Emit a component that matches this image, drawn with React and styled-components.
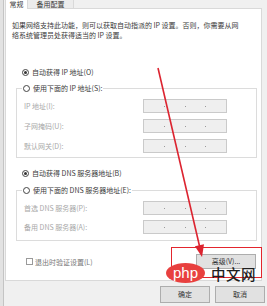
import React from 'react'
import styled, { createGlobalStyle } from 'styled-components'

const GlobalStyle = createGlobalStyle`
  html, body { margin: 0; padding: 0; background: #f0f0f0; }
  body { font-family: "Noto Sans CJK SC", "Noto Sans", sans-serif; }
`

const Window = styled.div`
  position: relative;
  display: flex;
  width: 267px;
  height: 306px;
  overflow: hidden;
  background: #f0f0f0;
  color: #3a3a3a;
  font-size: 7px;
`

const Edge = styled.div`
  width: 3px;
  border-right: 1px solid #c4c4c4;
  background: #e2e2e2;
`

const Main = styled.div`
  flex: 1;
  display: flex;
  flex-direction: column;
`

const Tabs = styled.div`
  position: relative;
  z-index: 1;
  display: flex;
  align-items: flex-start;
  height: 9px;
  margin-bottom: -1px;
  padding-left: 1px;
`

const Tab = styled.div`
  box-sizing: border-box;
  width: ${p => p.$w}px;
  height: ${p => (p.$active ? 9 : 8)}px;
  line-height: 9px;
  text-align: center;
  font-size: 7px;
  background: ${p => (p.$active ? '#fff' : '#ececec')};
  border: 1px solid #d9d9d9;
  border-top: none;
  border-bottom: none;
  ${p => !p.$active && 'border-left: none;'}
`

const Panel = styled.div`
  box-sizing: border-box;
  width: 257px;
  height: 273px;
  margin-left: 1px;
  padding: 11px 4px 0 6px;
  background: #fff;
  border: 1px solid #d9d9d9;
  display: flex;
  flex-direction: column;
`

const Intro = styled.p`
  margin: 0;
  line-height: 10px;
`

const Option = styled.label`
  display: flex;
  align-items: center;
  gap: 3px;
  height: 12px;
  margin: ${p => p.$top || 0}px 0 0 10px;
  white-space: nowrap;
`

const Radio = styled.span`
  box-sizing: border-box;
  width: 7px;
  height: 7px;
  border: 1px solid #444;
  border-radius: 50%;
  background: #fff;
  display: flex;
  align-items: center;
  justify-content: center;

  &::after {
    content: '';
    width: 3px;
    height: 3px;
    border-radius: 50%;
    background: ${p => (p.$checked ? '#333' : 'transparent')};
  }
`

const Group = styled.fieldset`
  box-sizing: border-box;
  width: 241px;
  margin: ${p => p.$top}px 0 0 4px;
  padding: 5px 29px ${p => p.$bottom}px 5px;
  border: 1px solid #dcdcdc;
  display: flex;
  flex-direction: column;
  gap: ${p => p.$gap}px;

  legend {
    display: flex;
    align-items: center;
    gap: 3px;
    height: 12px;
    padding: 0 1px;
    white-space: nowrap;
  }
`

const Field = styled.div`
  display: flex;
  align-items: center;
  justify-content: space-between;
  height: 14px;
`

const FieldLabel = styled.span`
  margin-left: 2px;
  color: #a8a8a8;
`

const AddressBox = styled.div`
  box-sizing: border-box;
  width: 84px;
  height: 14px;
  background: #efefef;
  border: 1px solid #cacaca;
  display: flex;
  align-items: center;
  justify-content: space-evenly;

  span {
    width: 1px;
    height: 1px;
    background: #9a9a9a;
  }
`

const BottomRow = styled.div`
  display: flex;
  align-items: center;
  justify-content: space-between;
  height: 15px;
  margin-top: 13px;
`

const Check = styled.label`
  display: flex;
  align-items: center;
  gap: 2px;
  margin-left: 14px;
  color: #777;

  span {
    box-sizing: border-box;
    width: 7px;
    height: 7px;
    border: 1px solid #9a9a9a;
    background: #fff;
  }
`

const Button = styled.button`
  box-sizing: border-box;
  width: ${p => p.$w}px;
  height: ${p => p.$h}px;
  margin-right: ${p => p.$mr || 0}px;
  padding: 0;
  font: inherit;
  font-size: 7px;
  line-height: ${p => p.$lh || p.$h - 2}px;
  color: #333;
  background: #e1e1e1;
  border: 1px solid #adadad;
`

const Footer = styled.div`
  display: flex;
  justify-content: flex-end;
  gap: 5px;
  padding: 5px 2px 0 0;
`

const Highlight = styled.div`
  position: absolute;
  left: 171px;
  top: 247px;
  width: 91px;
  height: 31px;
  box-sizing: border-box;
  border: 1.5px solid #e3262e;
`

const Overlay = styled.svg`
  position: absolute;
  left: 0;
  top: 0;
  pointer-events: none;
`

const Watermark = styled.div`
  position: absolute;
  left: 166px;
  top: 263px;
  display: flex;
  align-items: center;
  gap: 6px;
`

const PhpBadge = styled.span`
  width: 39px;
  height: 20px;
  border-radius: 50%;
  background: #e8403f;
  color: #fff;
  font-family: "Liberation Sans", Arial, sans-serif;
  font-size: 15px;
  line-height: 19px;
  text-align: center;
`

const SiteName = styled.span`
  margin-top: 2px;
  color: #1e1e1e;
  font-size: 14.5px;
  font-weight: 500;
  line-height: 18px;
  letter-spacing: 0.5px;
`

const Address = () => (
  <AddressBox>
    <span />
    <span />
    <span />
  </AddressBox>
)

export default function App() {
  return (
    <>
      <GlobalStyle />
      <Window>
        <Edge />
        <Main>
          <Tabs>
            <Tab $w={23} $active>常规</Tab>
            <Tab $w={46}>备用配置</Tab>
          </Tabs>
          <Panel>
            <Intro>
              如果网络支持此功能，则可以获取自动指派的 IP 设置。否则，你需要从网
              <br />
              络系统管理员处获得适当的 IP 设置。
            </Intro>

            <Option $top={26}>
              <Radio $checked />
              自动获得 IP 地址(O)
            </Option>
            <Group $top={4} $bottom={4} $gap={6}>
              <legend>
                <Radio />
                使用下面的 IP 地址(S):
              </legend>
              <Field>
                <FieldLabel>IP 地址(I):</FieldLabel>
                <Address />
              </Field>
              <Field>
                <FieldLabel>子网掩码(U):</FieldLabel>
                <Address />
              </Field>
              <Field>
                <FieldLabel>默认网关(D):</FieldLabel>
                <Address />
              </Field>
            </Group>

            <Option $top={9}>
              <Radio $checked />
              自动获得 DNS 服务器地址(B)
            </Option>
            <Group $top={5} $bottom={6} $gap={5}>
              <legend>
                <Radio />
                使用下面的 DNS 服务器地址(E):
              </legend>
              <Field>
                <FieldLabel>首选 DNS 服务器(P):</FieldLabel>
                <Address />
              </Field>
              <Field>
                <FieldLabel>备用 DNS 服务器(A):</FieldLabel>
                <Address />
              </Field>
            </Group>

            <BottomRow>
              <Check>
                <span />
                退出时验证设置(L)
              </Check>
              <Button $w={60} $h={15} $lh={11} $mr={1}>高级(V)...</Button>
            </BottomRow>
          </Panel>
          <Footer>
            <Button $w={50} $h={17}>确定</Button>
            <Button $w={50} $h={17}>取消</Button>
          </Footer>
        </Main>

        <Highlight />
        <Overlay width="267" height="306" viewBox="0 0 267 306">
          <line x1="158" y1="68" x2="199.5" y2="246" stroke="#dc2430" strokeWidth="1.6" />
          <polygon points="202,257 204,244.3 194.9,246.3" fill="#dc2430" />
        </Overlay>
        <Watermark>
          <PhpBadge>php</PhpBadge>
          <SiteName>中文网</SiteName>
        </Watermark>
      </Window>
    </>
  )
}
